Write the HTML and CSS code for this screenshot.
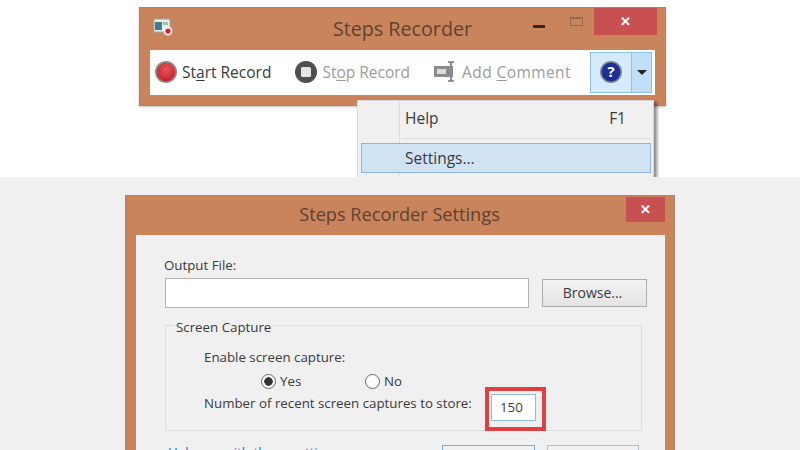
FILE: index.html
```html
<!DOCTYPE html>
<html lang="en">
<head>
    <meta charset="UTF-8">
    <title>Steps Recorder</title>
    <link rel="stylesheet" href="styles.css">
</head>
<body>
<section class="top">
    <div class="recorder">
        <div class="titlebar">
            <svg class="app-icon" width="20" height="20" viewBox="0 0 20 20">
                <rect x="1" y="2" width="16" height="13" fill="#e6eef0" stroke="#9aa6a8"/>
                <rect x="2" y="5" width="7" height="8" fill="#3f7f8c"/>
                <rect x="10" y="5" width="5" height="3" fill="#9ccb9a"/>
                <circle cx="15" cy="14" r="4.5" fill="#f4f0f0"/>
                <circle cx="15" cy="14" r="2.6" fill="#d2232e"/>
            </svg>
            <span class="title">Steps Recorder</span>
            <div class="win-buttons">
                <span class="min"></span>
                <span class="max"></span>
                <span class="close">&#x2715;</span>
            </div>
        </div>
        <div class="toolbar">
            <div class="tool">
                <svg width="24" height="24" viewBox="0 0 24 24">
                    <defs>
                        <radialGradient id="redBall" cx="50%" cy="35%" r="70%">
                            <stop offset="0" stop-color="#e4575c"/>
                            <stop offset="1" stop-color="#c11d28"/>
                        </radialGradient>
                    </defs>
                    <circle cx="12" cy="12" r="11" fill="#8d8d8d"/>
                    <circle cx="12" cy="12" r="9.3" fill="url(#redBall)"/>
                </svg>
                <span>St<u>a</u>rt Record</span>
            </div>
            <div class="tool off">
                <svg width="24" height="24" viewBox="0 0 24 24">
                    <circle cx="12" cy="12" r="11" fill="#4f4f4f"/>
                    <rect x="7" y="7" width="10" height="10" rx="1.5" fill="#e4e4e4"/>
                </svg>
                <span>St<u>o</u>p Record</span>
            </div>
            <div class="tool off wide">
                <svg width="24" height="24" viewBox="0 0 24 24">
                    <rect x="1" y="6" width="15" height="11" fill="#8b8b8b"/>
                    <rect x="4" y="9" width="9" height="5" fill="#dcdcdc"/>
                    <path d="M15 2h6M18 2v19M15 21h6" fill="none" stroke="#777" stroke-width="1.6"/>
                    <rect x="16" y="6" width="4" height="11" fill="#8b8b8b"/>
                </svg>
                <span>Add <u>C</u>omment</span>
            </div>
            <div class="help-split">
                <div class="help-btn">
                    <svg width="24" height="24" viewBox="0 0 24 24">
                        <circle cx="12" cy="12" r="11" fill="#7d8794"/>
                        <circle cx="12" cy="12" r="9.4" fill="#1d2f96"/>
                        <text class="help-mark" x="12" y="17" text-anchor="middle">?</text>
                    </svg>
                </div>
                <div class="help-arrow"></div>
            </div>
        </div>
    </div>
    <div class="menu">
        <div class="menu-row">
            <span>Help</span>
            <span class="shortcut">F1</span>
        </div>
        <div class="menu-line"></div>
        <div class="menu-row selected">
            <span>Settings...</span>
        </div>
    </div>
</section>

<section class="bottom">
    <div class="dialog">
        <div class="dialog-title">
            <span class="title">Steps Recorder Settings</span>
            <span class="close">&#x2715;</span>
        </div>
        <div class="dialog-body">
            <label class="field-label">Output File:</label>
            <div class="file-row">
                <div class="file-input"></div>
                <div class="btn browse">Browse...</div>
            </div>
            <fieldset class="capture">
                <legend>Screen Capture</legend>
                <div class="capture-label">Enable screen capture:</div>
                <div class="radios">
                    <span class="radio-item yes"><i class="radio on"></i>Yes</span>
                    <span class="radio-item"><i class="radio"></i>No</span>
                </div>
                <div class="store-row">
                    <span class="store-label">Number of recent screen captures to store:</span>
                    <div class="mark">
                        <div class="count">150</div>
                    </div>
                </div>
            </fieldset>
            <div class="dialog-foot">
                <span class="link">Help me with these settings</span>
                <div class="btn ok"></div>
                <div class="btn cancel"></div>
            </div>
        </div>
    </div>
</section>
</body>
</html>
```

FILE: styles.css
```css
html, body {
    margin: 0;
    padding: 0;
}
body {
    width: 800px;
    height: 450px;
    overflow: hidden;
    background: #fff;
    font-family: "Open Sans", "Noto Sans", sans-serif;
    color: #3a3a3a;
}
.top {
    position: relative;
    height: 177px;
    overflow: hidden;
    background: #fff;
    padding: 7px 0 0 139px;
    box-sizing: border-box;
}
.recorder {
    width: 527px;
    height: 99px;
    box-sizing: border-box;
    background: #c9845c;
    border: 1px solid #a98570;
    box-shadow: 0 1px 2px rgba(0,0,0,0.25);
    padding: 0 10px;
}
.titlebar {
    position: relative;
    height: 42px;
    box-sizing: border-box;
    padding-bottom: 2px;
    display: flex;
    align-items: center;
    justify-content: center;
}
.app-icon {
    position: absolute;
    left: 3px;
    top: 9px;
}
.title {
    font-size: 19.7px;
    color: #5e4234;
}
.win-buttons {
    position: absolute;
    right: -2px;
    top: 0;
    display: flex;
    align-items: flex-start;
}
.min {
    width: 12px;
    height: 3px;
    background: #33261f;
    margin: 17px 25px 0 0;
}
.max {
    width: 11px;
    height: 6px;
    border: 1px solid #8f6a55;
    border-top-width: 2px;
    margin: 9px 11px 0 0;
}
.close {
    display: block;
    width: 63px;
    height: 27px;
    line-height: 27px;
    background: #c75050;
    color: #fff;
    font-size: 13px;
    font-weight: bold;
    text-align: center;
}
.toolbar {
    height: 45px;
    box-sizing: border-box;
    padding: 0 0 1px 4px;
    background: #fff;
    display: flex;
    align-items: center;
    font-size: 15.5px;
}
.tool {
    display: flex;
    align-items: center;
    gap: 4px;
    margin-right: 23px;
    white-space: nowrap;
}
.tool u {
    text-underline-offset: 2px;
}
.tool.off {
    color: #9c9c9c;
}
.tool.wide {
    gap: 5px;
    margin-right: 0;
}
.tool.wide span {
    letter-spacing: 0.4px;
}
.help-split {
    display: flex;
    height: 41px;
    margin-left: auto;
    margin-right: 3px;
    border: 1px solid #8dc3e8;
    box-sizing: border-box;
}
.help-btn {
    width: 40px;
    background: #d5ebfb;
    display: flex;
    align-items: center;
    justify-content: center;
    border-right: 1px solid #8dc3e8;
}
.help-mark {
    font-size: 15px;
    font-weight: bold;
    fill: #fff;
}
.help-arrow {
    width: 19px;
    background: #bfe0f7;
    position: relative;
}
.help-arrow::after {
    content: "";
    position: absolute;
    left: 5px;
    top: 17px;
    border: 5px solid transparent;
    border-top: 5px solid #222;
    border-bottom: none;
}
.menu {
    position: absolute;
    left: 357px;
    top: 100px;
    width: 297px;
    height: 90px;
    background: #f0f0f0;
    border: 1px solid #d8d8d8;
    box-shadow: 3px 2px 3px rgba(0,0,0,0.45);
    box-sizing: border-box;
    padding: 0 2px 0 3px;
    font-size: 15.5px;
}
.menu::before {
    content: "";
    position: absolute;
    left: 41px;
    top: 0;
    bottom: 0;
    width: 1px;
    background: #dcdcdc;
}
.menu-row {
    position: relative;
    height: 34px;
    display: flex;
    align-items: center;
    justify-content: space-between;
    padding: 0 25px 0 44px;
}
.menu-line {
    height: 1px;
    background: #dcdcdc;
    margin: 3px 0 4px 41px;
}
.menu-row.selected {
    height: 30px;
    background: #cfe3f5;
    border: 1px solid #8db6dc;
    box-sizing: border-box;
    padding-left: 43px;
    padding-bottom: 1px;
}
.bottom {
    height: 273px;
    background: #f0f0f0;
    padding: 18px 0 0 125px;
    box-sizing: border-box;
    overflow: hidden;
}
.dialog {
    width: 550px;
    height: 300px;
    box-sizing: border-box;
    background: #c9845c;
    border: 1px solid #a98570;
    padding: 0 9px 0 10px;
}
.dialog-title {
    position: relative;
    height: 39px;
    box-sizing: border-box;
    padding: 0 2px 3px 0;
    display: flex;
    align-items: center;
    justify-content: center;
}
.dialog-title .title {
    font-size: 18.2px;
}
.dialog-title .close {
    position: absolute;
    right: 0;
    top: 1px;
    width: 39px;
    height: 25px;
    line-height: 25px;
}
.dialog-body {
    height: 260px;
    background: #f0f0f0;
    padding: 21px 18px 0 28px;
    font-size: 13.3px;
    box-sizing: border-box;
}
.field-label {
    display: block;
    height: 22px;
    line-height: 18px;
}
.file-row {
    display: flex;
    align-items: center;
    gap: 13px;
    margin-left: 1px;
}
.file-input {
    width: 364px;
    height: 30px;
    box-sizing: border-box;
    background: #fff;
    border: 1px solid #b4b4b4;
}
.btn {
    box-sizing: border-box;
    border: 1px solid #adadad;
    background: linear-gradient(#f2f2f2, #e4e4e4);
    text-align: center;
}
.browse {
    width: 105px;
    height: 28px;
    line-height: 26px;
    padding-right: 4px;
    font-size: 14px;
}
.capture {
    margin: 17px 0 0 1px;
    padding: 0 0 0 38px;
    width: 477px;
    height: 106px;
    box-sizing: border-box;
    border: 1px solid #dcdcdc;
    position: relative;
}
.capture legend {
    position: absolute;
    left: 9px;
    top: -8px;
    background: #f0f0f0;
    padding: 0 1px;
}
.capture-label {
    margin-top: 22px;
    line-height: 18px;
}
.radios {
    display: flex;
    height: 22px;
    align-items: center;
    margin-top: 4px;
    padding-left: 57px;
}
.radio-item {
    display: flex;
    align-items: center;
    gap: 4px;
}
.radio-item.yes {
    width: 104px;
}
.radio {
    width: 15px;
    height: 15px;
    box-sizing: border-box;
    border: 1px solid #666;
    border-radius: 50%;
    background: #fff;
}
.radio.on {
    background: radial-gradient(circle, #333 0 4px, #fff 4.5px);
}
.store-row {
    display: flex;
    align-items: flex-start;
    margin-top: -5px;
}
.store-label {
    flex: 0 0 281px;
    padding-top: 7px;
    line-height: 18px;
}
.mark {
    width: 61px;
    height: 44px;
    box-sizing: border-box;
    border: 4px solid #e0403f;
    padding: 3px 0 0 2px;
}
.count {
    width: 45px;
    height: 27px;
    line-height: 25px;
    box-sizing: border-box;
    border: 1px solid #8dbde0;
    background: #fff;
    padding-left: 8px;
}
.dialog-foot {
    display: flex;
    margin-top: 14px;
    padding-left: 4px;
}
.link {
    color: #2f6fc0;
    width: 274px;
    margin-top: -2px;
    white-space: nowrap;
}
.btn.ok {
    width: 93px;
    height: 30px;
    border-color: #6fb0e0;
    margin-right: 12px;
}
.btn.cancel {
    width: 92px;
    height: 30px;
    border-color: #a8c4dc;
}
```
